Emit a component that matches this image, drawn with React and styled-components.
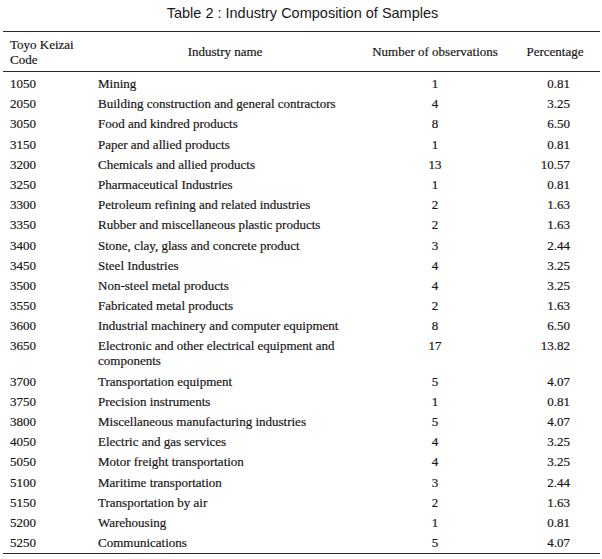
import styled, { createGlobalStyle } from "styled-components";

const GlobalStyle = createGlobalStyle`
  html, body {
    margin: 0;
    padding: 0;
    background: #fff;
  }
`;

const rows = [
  ["1050", "Mining", "1", "0.81"],
  ["2050", "Building construction and general contractors", "4", "3.25"],
  ["3050", "Food and kindred products", "8", "6.50"],
  ["3150", "Paper and allied products", "1", "0.81"],
  ["3200", "Chemicals and allied products", "13", "10.57"],
  ["3250", "Pharmaceutical Industries", "1", "0.81"],
  ["3300", "Petroleum refining and related industries", "2", "1.63"],
  ["3350", "Rubber and miscellaneous plastic products", "2", "1.63"],
  ["3400", "Stone, clay, glass and concrete product", "3", "2.44"],
  ["3450", "Steel Industries", "4", "3.25"],
  ["3500", "Non-steel metal products", "4", "3.25"],
  ["3550", "Fabricated metal products", "2", "1.63"],
  ["3600", "Industrial machinery and computer equipment", "8", "6.50"],
  ["3650", "Electronic and other electrical equipment and components", "17", "13.82"],
  ["3700", "Transportation equipment", "5", "4.07"],
  ["3750", "Precision instruments", "1", "0.81"],
  ["3800", "Miscellaneous manufacturing industries", "5", "4.07"],
  ["4050", "Electric and gas services", "4", "3.25"],
  ["5050", "Motor freight transportation", "4", "3.25"],
  ["5100", "Maritime transportation", "3", "2.44"],
  ["5150", "Transportation by air", "2", "1.63"],
  ["5200", "Warehousing", "1", "0.81"],
  ["5250", "Communications", "5", "4.07"],
];

const App = () => {
  return (
    <Page>
      <GlobalStyle />
      <Title>Table 2 : Industry Composition of Samples</Title>
      <Table>
        <colgroup>
          <col style={{ width: 87 }} />
          <col style={{ width: 270 }} />
          <col style={{ width: 150 }} />
          <col style={{ width: 90 }} />
        </colgroup>
        <thead>
          <tr>
            <HeadCell $align="left">
              Toyo Keizai
              <br />
              Code
            </HeadCell>
            <HeadCell>Industry name</HeadCell>
            <HeadCell>Number of observations</HeadCell>
            <HeadCell>Percentage</HeadCell>
          </tr>
        </thead>
        <tbody>
          {rows.map(([code, name, count, pct], i) => (
            <Row key={code} $first={i === 0}>
              <CodeCell>{code}</CodeCell>
              <NameCell>{name}</NameCell>
              <CountCell>{count}</CountCell>
              <PctCell>{pct}</PctCell>
            </Row>
          ))}
        </tbody>
      </Table>
    </Page>
  );
};

export default App;

const Page = styled.div`
  width: 602px;
  height: 559px;
  padding: 5px 2px 0 3px;
  box-sizing: border-box;
  color: #1a1718;
`;

const Title = styled.div`
  font-family: "Liberation Sans", Arial, sans-serif;
  font-size: 14.5px;
  line-height: 16px;
  text-align: center;
  padding-left: 2px;
  margin-bottom: 10px;
`;

const Table = styled.table`
  width: 597px;
  table-layout: fixed;
  border-collapse: collapse;
  border-top: 1.5px solid #2a2a2a;
  border-bottom: 1.5px solid #2a2a2a;
  color: #1a1718;

  th,
  td {
    font-family: "Liberation Serif", "Times New Roman", serif;
    font-size: 13px;
    -webkit-text-stroke: 0.2px currentColor;
  }
`;

const HeadCell = styled.th`
  font-weight: 400;
  text-align: ${(p) => p.$align || "center"};
  vertical-align: middle;
  line-height: 15px;
  padding: 4.5px 0 4.5px ${(p) => (p.$align === "left" ? "7px" : "0")};
  border-bottom: 1.5px solid #2a2a2a;
`;

const Row = styled.tr`
  td {
    line-height: 15px;
    padding-top: ${(p) => (p.$first ? "4px" : "2.6px")};
    padding-bottom: 2.6px;
    vertical-align: top;
  }
`;

const CodeCell = styled.td`
  padding-left: 7px;
`;

const NameCell = styled.td`
  padding-left: 8px;
  padding-right: 12px;
`;

const CountCell = styled.td`
  text-align: center;
`;

const PctCell = styled.td`
  text-align: right;
  padding-right: 30px;
`;
